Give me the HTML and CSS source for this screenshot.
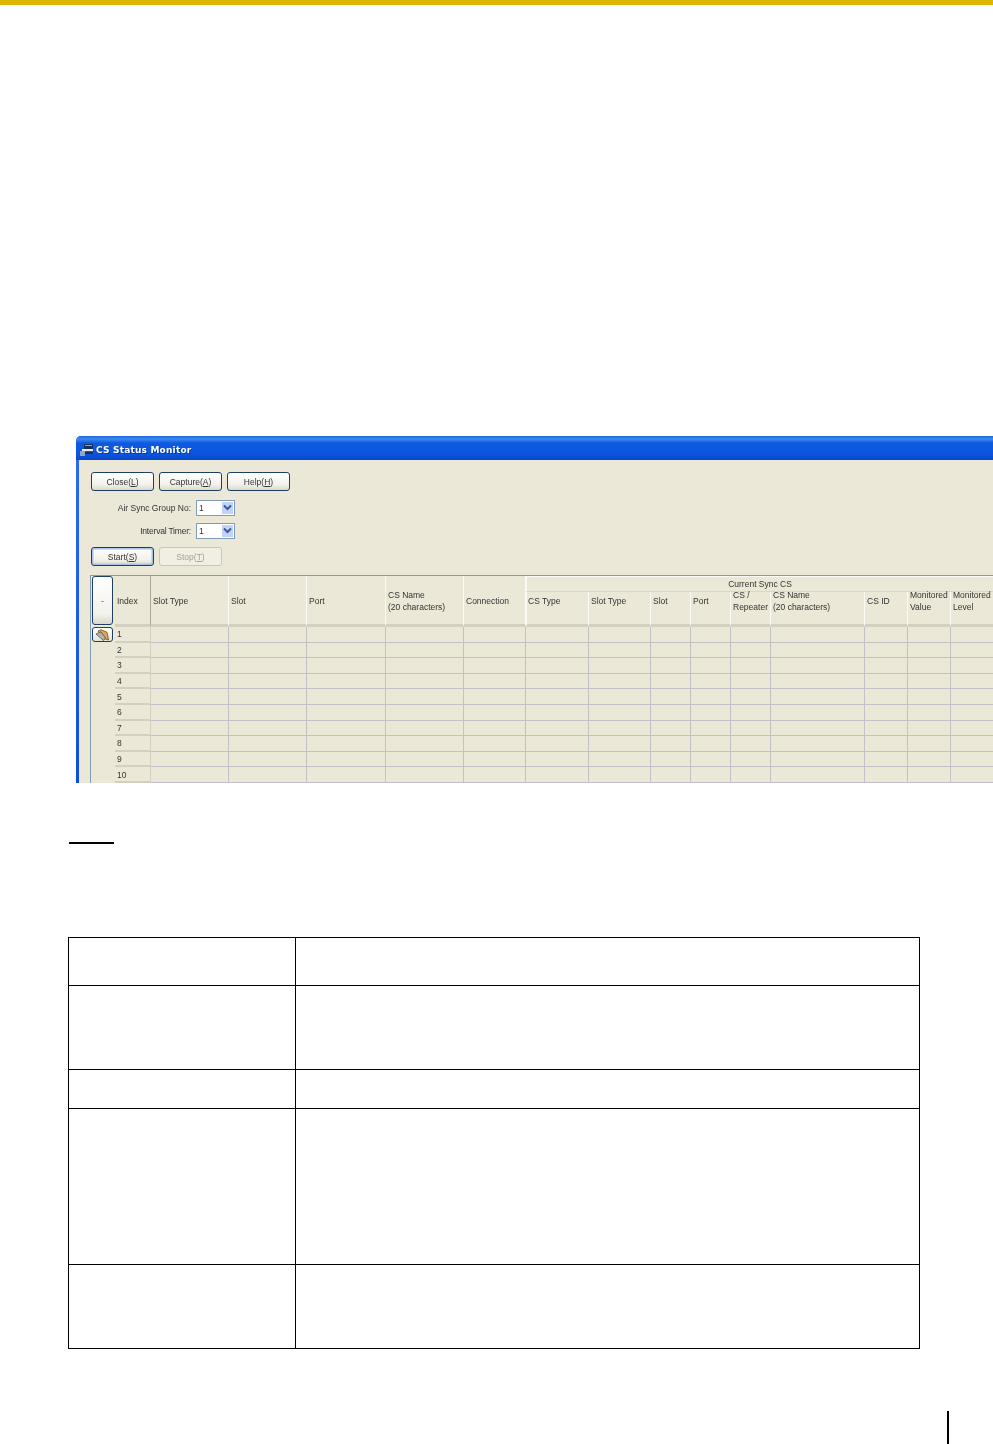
FILE: index.html
```html
<!DOCTYPE html>
<html lang="en">
<head>
<meta charset="utf-8">
<title>CS Status Monitor</title>
<link rel="stylesheet" href="styles.css">
</head>
<body>
<div class="topbar"></div>
<div class="shot">
  <div class="window">
    <div class="titlebar">
      <svg class="appicon" width="13" height="12" viewBox="0 0 13 12"><rect x="4" y="0" width="9" height="5" fill="#16305e"/><rect x="5" y="1" width="7" height="1" fill="#7fa6de"/><rect x="2" y="5" width="11" height="2" fill="#e8eef8"/><rect x="0" y="7" width="5" height="5" fill="#8fa6c4"/><rect x="5" y="8" width="8" height="2" fill="#16305e"/></svg>
      <span class="title">CS Status Monitor</span>
    </div>
    <div class="content">
      <div class="btnrow">
        <button class="btn">Close(<u>L</u>)</button>
        <button class="btn">Capture(<u>A</u>)</button>
        <button class="btn">Help(<u>H</u>)</button>
      </div>
      <div class="field field-a">
        <span class="flabel">Air Sync Group No:</span>
        <span class="combo"><span class="cval">1</span><span class="carrow"><svg width="9" height="7" viewBox="0 0 9 7"><path d="M1 1.5 4.5 5 8 1.5" fill="none" stroke="#3a5a9c" stroke-width="2"/></svg></span></span>
      </div>
      <div class="field field-b">
        <span class="flabel">Interval Timer:</span>
        <span class="combo"><span class="cval">1</span><span class="carrow"><svg width="9" height="7" viewBox="0 0 9 7"><path d="M1 1.5 4.5 5 8 1.5" fill="none" stroke="#3a5a9c" stroke-width="2"/></svg></span></span>
      </div>
      <div class="btnrow startrow">
        <button class="btn btn-default">Start(<u>S</u>)</button>
        <button class="btn btn-off" disabled>Stop(<u>T</u>)</button>
      </div>
      <table class="grid">
        <colgroup>
          <col class="c24"><col class="c36"><col class="c78"><col class="c78"><col class="c79"><col class="c78"><col class="c62">
          <col class="c63"><col class="c62"><col class="c40"><col class="c40"><col class="c40"><col class="c94"><col class="c43"><col class="c43"><col class="c43">
        </colgroup>
        <thead>
          <tr class="hr1">
            <th class="sel" rowspan="2"><button class="minus">-</button></th>
            <th class="hleft" rowspan="2">Index</th>
            <th class="hleft" rowspan="2">Slot Type</th>
            <th class="hleft" rowspan="2">Slot</th>
            <th class="hleft" rowspan="2">Port</th>
            <th class="hleft" rowspan="2">CS Name<br>(20 characters)</th>
            <th class="hleft" rowspan="2">Connection</th>
            <th class="group" colspan="9">Current Sync CS</th>
          </tr>
          <tr class="hr2">
            <th><span class="hl">CS Type</span></th>
            <th><span class="hl">Slot Type</span></th>
            <th><span class="hl">Slot</span></th>
            <th><span class="hl">Port</span></th>
            <th><span class="hl"><span>CS /</span><span>Repeater</span></span></th>
            <th><span class="hl"><span>CS Name</span><span>(20 characters)</span></span></th>
            <th><span class="hl">CS ID</span></th>
            <th><span class="hl"><span>Monitored</span><span>Value</span></span></th>
            <th><span class="hl"><span>Monitored</span><span>Level</span></span></th>
          </tr>
        </thead>
        <tbody>
          <tr><td class="sel"><button class="rowbtn"><svg width="15" height="12" viewBox="0 0 15 12"><path d="M3 2 6 .7l6 2.6L13.5 11 9 9.5Z" fill="#e8a64e" stroke="#6b4f28" stroke-width=".8"/><path d="M1 5l5-2.2 4.500 6.200L8.500 11.500Z" fill="#b3b3ae" stroke="#4e4e4e" stroke-width=".8"/></svg></button></td><th class="rh">1</th><td></td><td></td><td></td><td></td><td></td><td></td><td></td><td></td><td></td><td></td><td></td><td></td><td></td><td></td></tr>
          <tr><td class="sel"></td><th class="rh">2</th><td></td><td></td><td></td><td></td><td></td><td></td><td></td><td></td><td></td><td></td><td></td><td></td><td></td><td></td></tr>
          <tr><td class="sel"></td><th class="rh">3</th><td></td><td></td><td></td><td></td><td></td><td></td><td></td><td></td><td></td><td></td><td></td><td></td><td></td><td></td></tr>
          <tr><td class="sel"></td><th class="rh">4</th><td></td><td></td><td></td><td></td><td></td><td></td><td></td><td></td><td></td><td></td><td></td><td></td><td></td><td></td></tr>
          <tr><td class="sel"></td><th class="rh">5</th><td></td><td></td><td></td><td></td><td></td><td></td><td></td><td></td><td></td><td></td><td></td><td></td><td></td><td></td></tr>
          <tr><td class="sel"></td><th class="rh">6</th><td></td><td></td><td></td><td></td><td></td><td></td><td></td><td></td><td></td><td></td><td></td><td></td><td></td><td></td></tr>
          <tr><td class="sel"></td><th class="rh">7</th><td></td><td></td><td></td><td></td><td></td><td></td><td></td><td></td><td></td><td></td><td></td><td></td><td></td><td></td></tr>
          <tr><td class="sel"></td><th class="rh">8</th><td></td><td></td><td></td><td></td><td></td><td></td><td></td><td></td><td></td><td></td><td></td><td></td><td></td><td></td></tr>
          <tr><td class="sel"></td><th class="rh">9</th><td></td><td></td><td></td><td></td><td></td><td></td><td></td><td></td><td></td><td></td><td></td><td></td><td></td><td></td></tr>
          <tr><td class="sel"></td><th class="rh">10</th><td></td><td></td><td></td><td></td><td></td><td></td><td></td><td></td><td></td><td></td><td></td><td></td><td></td><td></td></tr>
        </tbody>
      </table>
    </div>
  </div>
</div>
<div class="noterule"></div>
<table class="doc">
  <tr class="r1"><td class="dl"></td><td></td></tr>
  <tr class="r2"><td class="dl"></td><td></td></tr>
  <tr class="r3"><td class="dl"></td><td></td></tr>
  <tr class="r4"><td class="dl"></td><td></td></tr>
  <tr class="r5"><td class="dl"></td><td></td></tr>
</table>
<div class="footer"><div class="footbar"></div></div>
</body>
</html>
```
FILE: styles.css
```css
* { box-sizing: border-box; }
html, body { margin: 0; padding: 0; background: #fff; }
body { width: 993px; height: 1444px; overflow: hidden; font-family: "Liberation Sans", Arial, sans-serif; color: #222; }

.topbar { height: 5px; background: #deb500; }

.shot { margin: 431px 0 0 76px; width: 917px; height: 347px; overflow: hidden; }
.window { width: 960px; height: 347px; background: linear-gradient(#2a6de8, #0a50dc); padding: 0 0 0 3px; border-radius: 5px 5px 0 0; filter: blur(.35px); }
.titlebar { height: 24px; display: flex; align-items: center; gap: 3px; padding: 3px 0 0 2px;
  background: linear-gradient(#1f62d8 0, #3b8bf2 3px, #0f5ae0 7px, #0a55e0 18px, #0a48c4 24px); border-radius: 5px 5px 0 0; margin-left: -3px; }
.appicon { flex: none; margin-left: 2px; }
.title { color: #fff; font: bold 9px "DejaVu Sans", sans-serif; letter-spacing: .2px; text-shadow: 1px 1px 0 #0a3a90; }
.content { height: 323px; background: #ebe8d8; padding: 12px 0 0 12px; overflow: hidden; }

.btnrow { display: flex; gap: 5px; }
.btn { width: 63px; height: 19px; padding: 0; font: 8.5px "Liberation Sans", sans-serif; color: #333; background: linear-gradient(#fff, #f2f1ea 70%, #dcd8c8);
  border: 1px solid #1d3f64; border-radius: 3px; }
.btn-default { border-color: #1d3f64; box-shadow: inset 0 0 0 1.5px #a9c2e8; }
.btn-off { color: #a3a294; border-color: #c9c7b8; background: #f1efe4; }

.field { display: flex; align-items: center; height: 17px; font-size: 8.5px; color: #333; }
.field-a { margin-top: 8px; }
.field-b { margin-top: 6px; }
.field-b .flabel { letter-spacing: -.2px; }
.flabel { width: 100px; margin-right: 5px; text-align: right; white-space: nowrap; }
.combo { width: 39px; height: 16px; display: flex; background: #fff; border: 1px solid #7f9db9; padding: 1px; }
.cval { flex: 1; padding-left: 1px; line-height: 12px; }
.carrow { width: 11px; background: #c3d3f8; display: flex; align-items: center; justify-content: center; }

.startrow { margin-top: 8px; }

.grid { border-collapse: separate; border-spacing: 0; table-layout: fixed; width: 903px; margin: 9px 0 0 -1px; font-size: 8.5px; color: #333; border-top: 1px solid #7f9db9; border-left: 1px solid #7f9db9; }
.c24 { width: 24px; } .c36 { width: 36px; } .c78 { width: 78px; } .c79 { width: 79px; } .c62 { width: 62px; } .c63 { width: 63px; } .c40 { width: 40px; } .c94 { width: 94px; } .c43 { width: 43px; }
.grid th { font-weight: normal; text-align: left; padding: 0 0 0 2px; line-height: 12px; border-right: 1px solid #fbfaf4; border-bottom: 3px solid #d3d0bf; white-space: nowrap; overflow: hidden; background: #ebe8d8; }
.grid th.hleft { padding-top: 2px; }
.grid thead .sel { padding: 0; border: 0; vertical-align: top; }
.grid thead tr:first-child th:nth-child(2) { border-right-color: #aca899; }
.grid .hr1 { height: 16px; }
.grid .hr2 { height: 35px; }
.grid .group { text-align: center; border-bottom: 1px solid #d9d6c6; border-top: 1px solid #fbfaf4; border-left: 1px solid #fbfaf4; padding: 0; }
.grid .hr2 th { vertical-align: top; overflow: visible; border-bottom: 3px solid #d3d0bf; }
.grid .hr2 th:first-child { padding-left: 1px; border-left: 1px solid #fbfaf4; }
.hl { display: flex; flex-direction: column; justify-content: center; height: 24px; margin-top: -3px; }
.minus { display: block; width: 21px; height: 49px; margin-left: 1px; padding: 0; font: 9px "Liberation Sans", sans-serif; color: #555; background: linear-gradient(#fff, #f2f1ea 80%, #dcd8c8); border: 1px solid #1d3f64; border-radius: 3px; }
.grid tbody tr { height: 15.6px; }
.grid td { padding: 0; border-right: 1px solid #c3c1c8; border-bottom: 1px solid #c3c1c8; background: #ebe8d8; }
.grid td.sel { border: 0; vertical-align: top; }
.grid th.rh { padding: 2px 0 0 2px; line-height: 11px; border-right: 1px solid #d3d0bf; border-bottom: 2px solid #d3d0bf; }
.rowbtn { display: flex; align-items: center; justify-content: center; width: 21px; height: 15px; margin: 0 0 0 1px; padding: 0; background: linear-gradient(#fff, #e6e3d6); border: 1px solid #1d3f64; border-radius: 3px; }

.noterule { width: 45px; height: 1.5px; background: #000; margin: 59px 0 0 69px; }

.doc { width: 852px; height: 412px; margin: 93px 0 0 68px; border-collapse: collapse; table-layout: fixed; }
.doc td { border: 1.5px solid #000; padding: 0; }
.doc .dl { width: 227px; }
.r1 { height: 48px; } .r2 { height: 84px; } .r3 { height: 39px; } .r4 { height: 156px; } .r5 { height: 84px; }

.footer { display: flex; justify-content: flex-start; margin: 62px 0 0 947px; }
.footbar { width: 2px; height: 33px; background: #000; }
```
